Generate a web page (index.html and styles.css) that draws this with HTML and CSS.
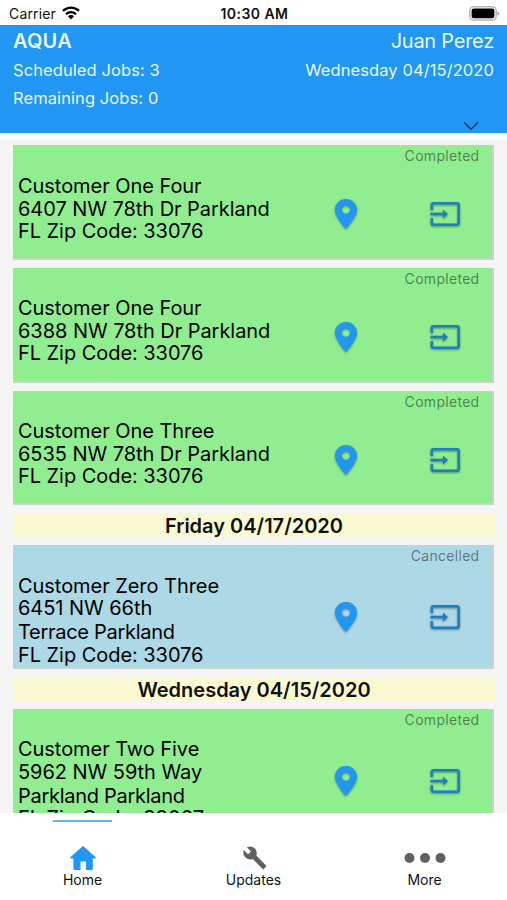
FILE: index.html
```
<!DOCTYPE html>
<html lang="en">
<head>
	<meta charset="UTF-8">
	<title>AQUA</title>
	<link rel="stylesheet" href="styles.css">
</head>
<body>
	<svg class="symbols" width="0" height="0">
		<symbol id="pin" viewBox="0 0 24 32">
			<path fill-rule="evenodd" d="M12 1C5.9 1 1 5.8 1 11.8C1 19 12 31 12 31S23 19 23 11.8C23 5.8 18.1 1 12 1zM12 7.4a4.2 4.2 0 1 1 0 8.4a4.2 4.2 0 0 1 0-8.4z"/>
		</symbol>
		<symbol id="enter" viewBox="0 0 32 26">
			<path fill="none" stroke="currentColor" stroke-width="2.5" d="M2.8 9V4Q2.8 2.3 4.5 2.3H28Q29.7 2.3 29.7 4V22Q29.7 23.7 28 23.7H4.5Q2.8 23.7 2.8 22V17M1.5 13H16"/>
			<path d="M14 8.6L19 13L14 17.4z"/>
		</symbol>
	</svg>
	<div class="wrap">
		<div class="status">
			<div class="carrier">
				<span>Carrier</span>
				<svg width="18" height="14" viewBox="0 0 18 14">
					<g fill="none" stroke="#000" stroke-width="2.3">
						<path d="M1 4.9C5.6.6 12.4.6 17 4.9"/>
						<path d="M4 8.1C6.8 5.4 11.2 5.4 14 8.1"/>
					</g>
					<path d="M9 13.5L5.9 10.3C7.6 8.7 10.4 8.7 12.1 10.3z"/>
				</svg>
			</div>
			<div class="time">10:30 AM</div>
			<div class="battery">
				<svg width="31" height="15" viewBox="0 0 31 15">
					<rect x=".8" y=".8" width="26.4" height="13.2" rx="3.8" fill="#fff" stroke="#b5b5b5" stroke-width="1.5"/>
					<rect x="2.6" y="2.5" width="22.8" height="9.8" rx="2.2"/>
					<path fill="#aaa" d="M28.4 5.2Q30.3 6 30.3 7.5T28.4 9.8z"/>
				</svg>
			</div>
		</div>

		<div class="header">
			<div class="row title">
				<b class="brand">AQUA</b>
				<span class="user">Juan Perez</span>
			</div>
			<div class="row info">
				<span>Scheduled Jobs: 3</span>
				<span>Wednesday 04/15/2020</span>
			</div>
			<div class="row info">
				<span>Remaining Jobs: 0</span>
			</div>
			<svg class="arrow" width="16" height="10" viewBox="0 0 16 10"><path fill="none" stroke="#0b3a66" stroke-width="1.4" d="M1 1.2L8 8.3L15 1.2"/></svg>
		</div>

		<div class="list">
			<div class="card">
				<div class="text">
					<p>Customer One Four</p>
					<p class="addr">6407 NW 78th Dr Parkland</p>
					<p>FL Zip Code: 33076</p>
				</div>
				<div class="side">
					<span class="state">Completed</span>
					<div class="icons">
						<svg class="pin"><use href="#pin"/></svg>
						<svg class="enter"><use href="#enter"/></svg>
					</div>
				</div>
			</div>
			<div class="card">
				<div class="text">
					<p>Customer One Four</p>
					<p class="addr">6388 NW 78th Dr Parkland</p>
					<p>FL Zip Code: 33076</p>
				</div>
				<div class="side">
					<span class="state">Completed</span>
					<div class="icons">
						<svg class="pin"><use href="#pin"/></svg>
						<svg class="enter"><use href="#enter"/></svg>
					</div>
				</div>
			</div>
			<div class="card">
				<div class="text">
					<p>Customer One Three</p>
					<p class="addr">6535 NW 78th Dr Parkland</p>
					<p>FL Zip Code: 33076</p>
				</div>
				<div class="side">
					<span class="state">Completed</span>
					<div class="icons">
						<svg class="pin"><use href="#pin"/></svg>
						<svg class="enter"><use href="#enter"/></svg>
					</div>
				</div>
			</div>

			<div class="day">Friday 04/17/2020</div>
			<div class="card tall cancelled">
				<div class="text">
					<p>Customer Zero Three</p>
					<p class="addr">6451 NW 66th<br><span class="city">Terrace Parkland</span></p>
					<p>FL Zip Code: 33076</p>
				</div>
				<div class="side">
					<span class="state">Cancelled</span>
					<div class="icons">
						<svg class="pin"><use href="#pin"/></svg>
						<svg class="enter"><use href="#enter"/></svg>
					</div>
				</div>
			</div>

			<div class="day">Wednesday 04/15/2020</div>
			<div class="card tall">
				<div class="text">
					<p>Customer Two Five</p>
					<p class="addr">5962 NW 59th Way<br><span class="city">Parkland Parkland</span></p>
					<p>FL Zip Code: 33067</p>
				</div>
				<div class="side">
					<span class="state">Completed</span>
					<div class="icons">
						<svg class="pin"><use href="#pin"/></svg>
						<svg class="enter"><use href="#enter"/></svg>
					</div>
				</div>
			</div>
		</div>

		<div class="tabs">
			<div class="tab active">
				<svg width="28" height="26" viewBox="0 0 28 26"><path fill="#2196f3" d="M14 1L27 12.4L26 13.6H23.8V23.5Q23.8 25 22.3 25H17V16.5H11.5V25H6Q4.4 25 4.4 23.5V13.6H2L1 12.4z"/></svg>
				<span>Home</span>
			</div>
			<div class="tab">
				<svg width="26" height="26" viewBox="0 0 26 26"><path fill="#616161" d="M2.8 5.1L7.1 9.2L10 6.4L5.9 2.2C9 .8 12.4 1.5 14.3 4C15.8 6 16.1 8.4 15.3 10.6L25 20.5Q25.6 21.2 25 21.8L22.8 23.9Q22.2 24.4 21.5 23.8L11.7 14C9.3 15 6.5 14.5 4.5 12.6C2.4 10.5 1.8 7.5 2.8 5.1z"/></svg>
				<span>Updates</span>
			</div>
			<div class="tab">
				<svg width="42" height="26" viewBox="0 0 42 26" fill="#616161"><circle cx="5.5" cy="13" r="5"/><circle cx="21" cy="13" r="5"/><circle cx="36.5" cy="13" r="5"/></svg>
				<span>More</span>
			</div>
		</div>
	</div>
</body>
</html>
```
FILE: styles.css
```
body,p{
	margin: 0;
	padding: 0;
}
body{
	background: #fff;
	font-family: Inter, "Liberation Sans", sans-serif;
	color: #111;
}
svg{
	display: block;
	flex: none;
}
.symbols{
	position: absolute;
}
.wrap{
	display: flex;
	flex-direction: column;
	width: 507px;
	height: 900px;
	overflow: hidden;
}
.status{
	display: grid;
	grid-template-columns: 1fr auto 1fr;
	align-items: center;
	height: 25px;
	padding: 1px 7px 0 9px;
	box-sizing: border-box;
	font-size: 14px;
}
.carrier{
	display: flex;
	align-items: center;
	gap: 6px;
	letter-spacing: .15px;
}
.time{
	font-weight: 600;
	letter-spacing: .45px;
}
.battery{
	display: flex;
	justify-content: flex-end;
}
/* header */
.header{
	height: 108px;
	background: #2196f3;
	color: #e9f6ff;
	padding: 0 13px;
	box-sizing: border-box;
	flex: none;
}
.row{
	display: flex;
	justify-content: space-between;
}
.title{
	font-size: 20px;
	line-height: 32px;
	margin-bottom: -1px;
}
.brand{
	font-weight: 600;
	letter-spacing: .2px;
}
.user{
	letter-spacing: -.25px;
}
.info{
	font-size: 16.5px;
	line-height: 28px;
	letter-spacing: .09px;
}
.arrow{
	margin: 9px 15.5px 0 auto;
}
/* list */
.list{
	display: flex;
	flex-direction: column;
	gap: 8px;
	height: 673px;
	margin-top: 7px;
	padding: 5.4px 13px 0;
	box-sizing: border-box;
	overflow: hidden;
	background: #f5f5f5;
	flex: none;
}
.card{
	display: flex;
	justify-content: space-between;
	flex: none;
	height: 114.6px;
	box-sizing: border-box;
	background: #90ee90;
	border-right: 2px solid #ccd2cc;
	border-bottom: 2px solid #ccd2cc;
}
.tall{
	height: 123.9px;
}
.cancelled{
	background: #add8e6;
}
.text{
	padding: 29.4px 0 0 5px;
	font-size: 20px;
	line-height: 22.5px;
	white-space: nowrap;
	letter-spacing: -.05px;
	color: #000;
}
.addr{
	line-height: 24px;
	margin: -.75px 0;
}
.city{
	letter-spacing: -.28px;
}
.side{
	width: 158px;
}
.state{
	display: block;
	padding-right: 12.5px;
	text-align: right;
	font-size: 14px;
	line-height: 21px;
	letter-spacing: .3px;
	color: rgba(0,0,0,.47);
}
.icons{
	display: flex;
	align-items: center;
	justify-content: space-between;
	padding: 32px 31px 0 0;
	color: #1b7fc4;
	filter: drop-shadow(0 1px 1px rgba(0,0,0,.4));
}
.tall .icons{
	padding-top: 35px;
}
.pin{
	width: 24px;
	height: 32px;
	fill: #2196f3;
}
.enter{
	width: 32px;
	height: 26px;
	fill: currentColor;
}
.day{
	height: 25px;
	margin: -.5px -1px -.5px 0;
	background: #fafad2;
	text-align: center;
	font-size: 20px;
	line-height: 26px;
	font-weight: 600;
	flex: none;
}
/* tabs */
.tabs{
	display: flex;
	flex: 1;
	margin: 0 -3px;
}
.tab{
	display: flex;
	flex-direction: column;
	align-items: center;
	flex: 1;
	font-size: 14px;
	line-height: 18px;
	padding-top: 32px;
}
.active:before{
	content: "";
	width: 59px;
	height: 2px;
	margin: -25px 0 23px;
	background: #64b5f6;
}
```
